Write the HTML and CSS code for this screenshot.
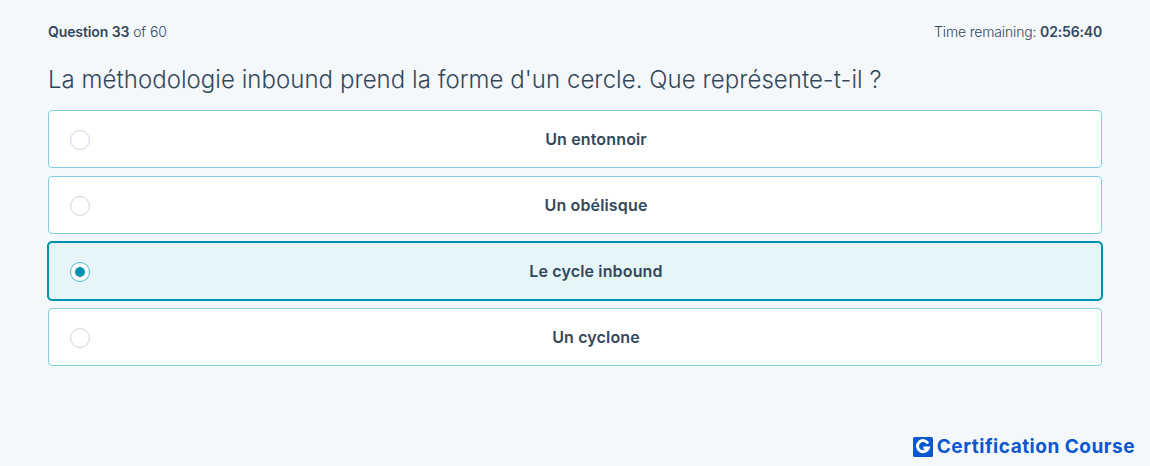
FILE: index.html
```html
<!DOCTYPE html>
<html lang="fr">
<head>
<meta charset="utf-8">
<title>Question 33</title>
<link rel="stylesheet" href="styles.css">
</head>
<body>
<main class="quiz">
  <header class="meta">
    <div><strong>Question 33</strong> of 60</div>
    <div class="timer">Time remaining: <strong>02:56:40</strong></div>
  </header>
  <h1 class="question">La méthodologie inbound prend la forme d'un cercle. Que représente-t-il ?</h1>
  <div class="options">
    <div class="option"><span class="radio"></span><span class="label">Un entonnoir</span></div>
    <div class="option"><span class="radio"></span><span class="label">Un obélisque</span></div>
    <div class="option selected"><span class="radio"></span><span class="label">Le cycle inbound</span></div>
    <div class="option"><span class="radio"></span><span class="label">Un cyclone</span></div>
  </div>
</main>
<footer class="brand">
  <svg class="logo" viewBox="0 0 20 20" aria-hidden="true"><rect width="20" height="20" rx="1.5" fill="#0b57d0"/><path d="M15 6.4 A5.6 5.6 0 1 0 15.4 11 H10.4" fill="none" stroke="#fff" stroke-width="3"/></svg>
  <span>Certification Course</span>
</footer>
</body>
</html>
```
FILE: styles.css
```css
* { box-sizing: border-box; }
body {
  margin: 0;
  background: #f5f8fb;
  color: #33475b;
  font-family: Inter, "Liberation Sans", sans-serif;
  height: 466px;
  overflow: hidden;
}
.quiz { padding: 23px 48px 0; }
.meta {
  display: flex;
  justify-content: space-between;
  font-size: 14px;
  line-height: 18px;
  font-weight: 300;
  letter-spacing: -0.1px;
}
.meta .timer { letter-spacing: -0.16px; }
.meta strong { font-weight: 600; }
.question {
  margin: 22px 0 14px;
  font-size: 24px;
  line-height: 33px;
  font-weight: 300;
  letter-spacing: 0.04px;
}
.options { display: flex; flex-direction: column; gap: 8px; }
.option {
  height: 58px;
  display: flex;
  align-items: center;
  background: #fff;
  border: 1px solid #7fd1de;
  border-radius: 4px;
  padding: 0 21px;
}
.option.selected {
  background: #e5f5f8;
  border-color: #0091ae;
  box-shadow: 0 0 0 1px #0091ae;
}
.radio {
  width: 20px;
  height: 20px;
  margin-top: 2px;
  border-radius: 50%;
  border: 1px solid #cbd6e2;
  background: #fff;
  flex: none;
  display: flex;
  align-items: center;
  justify-content: center;
}
.selected .radio { border-color: #4fb8cc; }
.selected .radio::after {
  content: "";
  width: 10px;
  height: 10px;
  border-radius: 50%;
  background: #0091ae;
}
.label {
  flex: 1;
  padding-left: 22px;
  text-align: center;
  font-size: 16px;
  font-weight: 600;
  letter-spacing: 0.15px;
}
.brand {
  position: absolute;
  right: 15px;
  bottom: 9px;
  display: flex;
  align-items: center;
  gap: 4px;
  color: #0b57d0;
  font-family: Inter, sans-serif;
  font-weight: 700;
  font-size: 19px;
  letter-spacing: 0.5px;
  line-height: 20px;
}
.logo { width: 20px; height: 20px; }
```
